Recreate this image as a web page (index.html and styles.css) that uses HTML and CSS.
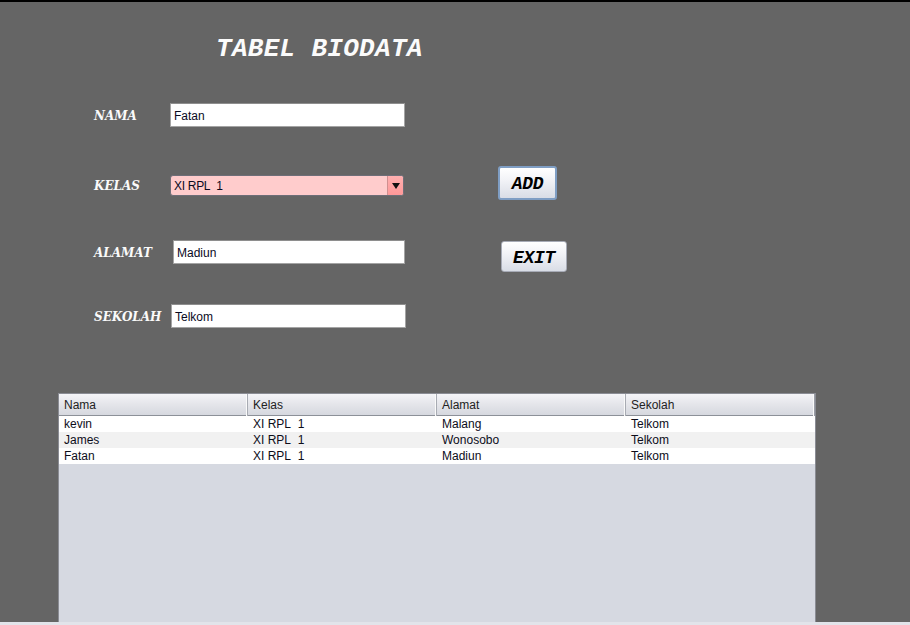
FILE: index.html
```html
<!DOCTYPE html>
<html>
<head>
<meta charset="utf-8">
<link rel="stylesheet" href="styles.css">
</head>
<body>
<div class="window">
  <div class="content">
    <h1 class="title">TABEL BIODATA</h1>
    <div class="form">
      <div class="row row-nama">
        <span class="label">NAMA</span>
        <div class="field">Fatan</div>
      </div>
      <div class="row row-kelas">
        <span class="label">KELAS</span>
        <div class="combo">
          <span class="combo-text">XI RPL&nbsp; 1</span>
          <span class="combo-btn"><svg width="8" height="6" viewBox="0 0 8 6"><path d="M0 0H8L4 6Z" fill="#111"/></svg></span>
        </div>
        <button class="btn btn-add">ADD</button>
      </div>
      <div class="row row-alamat">
        <span class="label">ALAMAT</span>
        <div class="field field-alamat">Madiun</div>
        <button class="btn btn-exit">EXIT</button>
      </div>
      <div class="row row-sekolah">
        <span class="label">SEKOLAH</span>
        <div class="field field-sekolah">Telkom</div>
      </div>
    </div>
    <div class="table">
      <div class="thead">
        <div class="th">Nama</div>
        <div class="th">Kelas</div>
        <div class="th">Alamat</div>
        <div class="th last">Sekolah</div>
      </div>
      <div class="tr">
        <div class="td">kevin</div><div class="td">XI RPL&nbsp; 1</div><div class="td">Malang</div><div class="td">Telkom</div>
      </div>
      <div class="tr alt">
        <div class="td">James</div><div class="td">XI RPL&nbsp; 1</div><div class="td">Wonosobo</div><div class="td">Telkom</div>
      </div>
      <div class="tr">
        <div class="td">Fatan</div><div class="td">XI RPL&nbsp; 1</div><div class="td">Madiun</div><div class="td">Telkom</div>
      </div>
    </div>
  </div>
  <div class="bottom-strip"></div>
</div>
</body>
</html>
```
FILE: styles.css
```css
* { box-sizing: border-box; }
html, body { margin: 0; padding: 0; }
body {
  width: 910px;
  height: 625px;
  overflow: hidden;
  background: #656565;
  font-family: "Liberation Sans", Arial, sans-serif;
}
.window {
  height: 625px;
  display: flex;
  flex-direction: column;
  border-top: 2px solid #000;
}
.content {
  flex: 1;
  display: flex;
  flex-direction: column;
  min-height: 0;
}
.title {
  margin: 0;
  height: 78px;
  padding: 34px 0 0 216px;
  font-family: "Liberation Mono", "Courier New", monospace;
  font-weight: bold;
  font-style: italic;
  font-size: 26px;
  line-height: 26px;
  color: #fbfbfb;
  letter-spacing: 0.3px;
}
.form {
  display: flex;
  flex-direction: column;
  padding-left: 94px;
}
.row {
  display: flex;
  align-items: center;
  height: 70px;
}
.row-alamat, .row-sekolah { height: 64px; }
.label {
  width: 76px;
  padding-top: 2px;
  font-family: "DejaVu Serif", "Liberation Serif", serif;
  font-weight: bold;
  font-style: italic;
  font-size: 12px;
  color: #fafafa;
}
.field {
  width: 235px;
  height: 24px;
  background: #fff;
  border: 1px solid #a4a4a4;
  border-top-color: #8e8e8e;
  padding: 5px 0 0 3px;
  font-size: 12px;
  line-height: 14px;
  color: #0a0a1e;
}
.field-alamat { margin-left: 3px; width: 232px; }
.field-sekolah { margin-left: 1px; width: 235px; }
.combo {
  width: 234px;
  height: 21px;
  display: flex;
  background: #ffcccc;
  border: 1px solid #6e6e78;
  border-radius: 3px;
  overflow: hidden;
  margin-top: 1px;
}
.combo-text {
  flex: 1;
  padding: 3px 0 0 3px;
  font-size: 12px;
  line-height: 14px;
  color: #0a0a1e;
  letter-spacing: -0.3px;
}
.combo-btn {
  width: 16px;
  display: flex;
  align-items: center;
  justify-content: center;
  background: linear-gradient(#ffb0b0, #ff9898);
  border-left: 1px solid #d09090;
}
.btn {
  font-family: "Liberation Mono", "Courier New", monospace;
  font-weight: bold;
  font-style: italic;
  font-size: 18px;
  color: #000;
  background: linear-gradient(#ffffff, #f2f3f7 40%, #d9dde6);
  border: 1px solid #a7abb6;
  border-radius: 3px;
  padding: 2px 0 0 0;
  letter-spacing: -0.3px;
}
.btn-add {
  margin-left: 94px;
  width: 59px;
  height: 34px;
  margin-top: -4px;
  border: 2px solid #7f9ec4;
}
.btn-exit {
  margin-left: 96px;
  width: 66px;
  height: 31px;
  margin-top: 9px;
}
.table {
  margin: 45px 0 0 58px;
  width: 758px;
  flex: 1;
  background: #d6d9e1;
  border: 1px solid #8a8c94;
  border-bottom: none;
  display: flex;
  flex-direction: column;
}
.thead {
  display: grid;
  grid-template-columns: 189px 189px 189px 1fr;
  height: 22px;
  background: linear-gradient(#f4f4f7, #e4e5ea 50%, #d6d8df);
  border-bottom: 1px solid #8c9098;
}
.th {
  font-size: 12px;
  line-height: 22px;
  padding-left: 5px;
  color: #222;
  border-right: 1px solid #a8abb3;
  box-shadow: inset -1px 0 0 #fafafa;
}
.th.last { border-right: 1px solid #9a9da5; }
.tr {
  display: grid;
  grid-template-columns: 189px 189px 189px 1fr;
  height: 16px;
  background: #fff;
}
.tr.alt { background: #f1f1f1; }
.td {
  font-size: 12px;
  line-height: 17px;
  padding-left: 5px;
  color: #0d0d1a;
}
.bottom-strip {
  height: 3px;
  background: #e2e4ea;
}
```
